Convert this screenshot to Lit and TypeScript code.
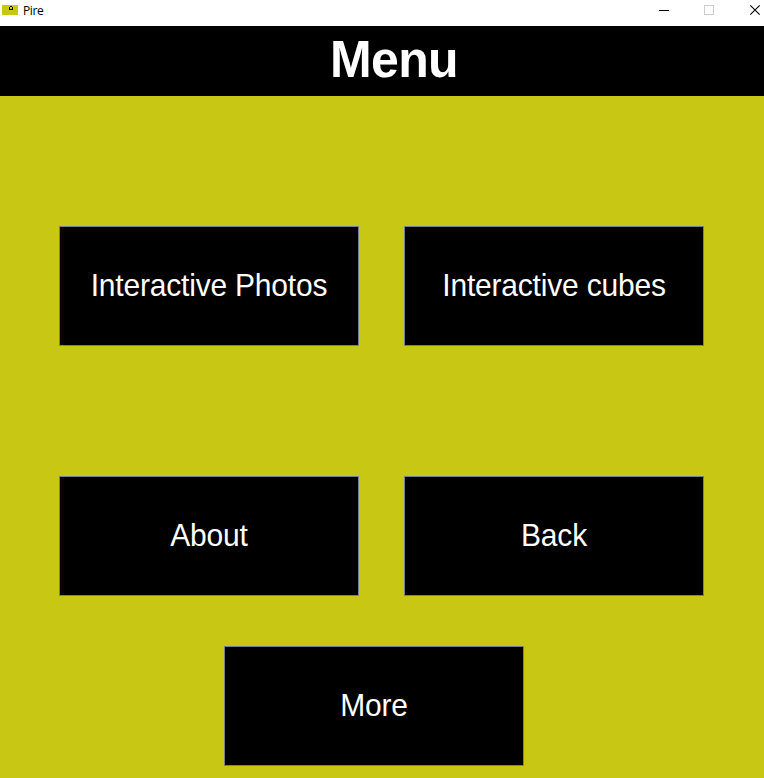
import { LitElement, html, css } from "lit";
import { customElement, property } from "lit/decorators.js";

@customElement("title-bar")
class TitleBar extends LitElement {
  static styles = css`
    :host {
      display: flex;
      height: 26px;
      background: #fff;
      color: #000;
      box-sizing: border-box;
      padding-left: 2px;
    }
    .icon { display: block; width: 16px; height: 10px; margin-top: 5px; }
    .name {
      flex: 1;
      margin-left: 5px;
      font: 12px/22px "Open Sans", "Noto Sans", sans-serif;
      letter-spacing: -0.4px;
    }
    .controls { display: block; width: 120px; height: 26px; }
  `;
  @property() name = "";
  render() {
    return html`
      <svg class="icon" viewBox="0 0 16 10" shape-rendering="crispEdges">
        <rect width="16" height="10" fill="#c8c814" />
        <path d="M8 1h2v1H8zM7 2h1v3H7zM10 2h1v3h-1zM8 4h2v1H8z" fill="#000" />
      </svg>
      <span class="name">${this.name}</span>
      <svg class="controls" viewBox="0 0 120 26" fill="none">
        <path d="M15 10.5h10" stroke="#000" />
        <rect x="60.5" y="5.5" width="9" height="9" stroke="#ccc" />
        <path d="M106.3 5.3l9.4 9.4M115.7 5.3l-9.4 9.4" stroke="#000" stroke-width="1.1" />
      </svg>
    `;
  }
}

@customElement("menu-button")
class MenuButton extends LitElement {
  static styles = css`
    :host { display: block; width: 300px; height: 120px; }
    .button {
      display: block;
      width: 100%;
      height: 100%;
      box-sizing: border-box;
      margin: 0;
      padding: 0;
      border: 1px solid #708090;
      border-radius: 0;
      background: #000;
      color: #fff;
      font: 30px/34px "Liberation Sans", Arial, sans-serif;
      letter-spacing: -0.2px;
    }
    .label { display: block; transform: scaleY(1.04); }
  `;
  @property() label = "";
  render() {
    return html`<button class="button"><span class="label">${this.label}</span></button>`;
  }
}

@customElement("app-root")
class AppRoot extends LitElement {
  static styles = css`
    :host {
      display: flex;
      flex-direction: column;
      height: 778px;
      overflow: hidden;
      background: #c8c814;
    }
    .header {
      height: 70px;
      box-sizing: border-box;
      padding-left: 24px;
      background: #000;
      color: #fff;
      text-align: center;
    }
    .heading {
      margin: 0;
      font: bold 50px/66px "Liberation Sans", Arial, sans-serif;
      letter-spacing: -0.6px;
      transform: scaleY(1.04);
    }
    .grid {
      display: grid;
      grid-template-columns: 300px 300px;
      gap: 130px 45px;
      padding: 130px 0 0 59px;
    }
    .last { padding: 50px 0 0 224px; }
  `;
  private items = ["Interactive Photos", "Interactive cubes", "About", "Back"];
  render() {
    return html`
      <title-bar name="Pire"></title-bar>
      <div class="header"><h1 class="heading">Menu</h1></div>
      <div class="grid">
        ${this.items.map((label) => html`<menu-button label=${label}></menu-button>`)}
      </div>
      <div class="last"><menu-button label="More"></menu-button></div>
    `;
  }
}
